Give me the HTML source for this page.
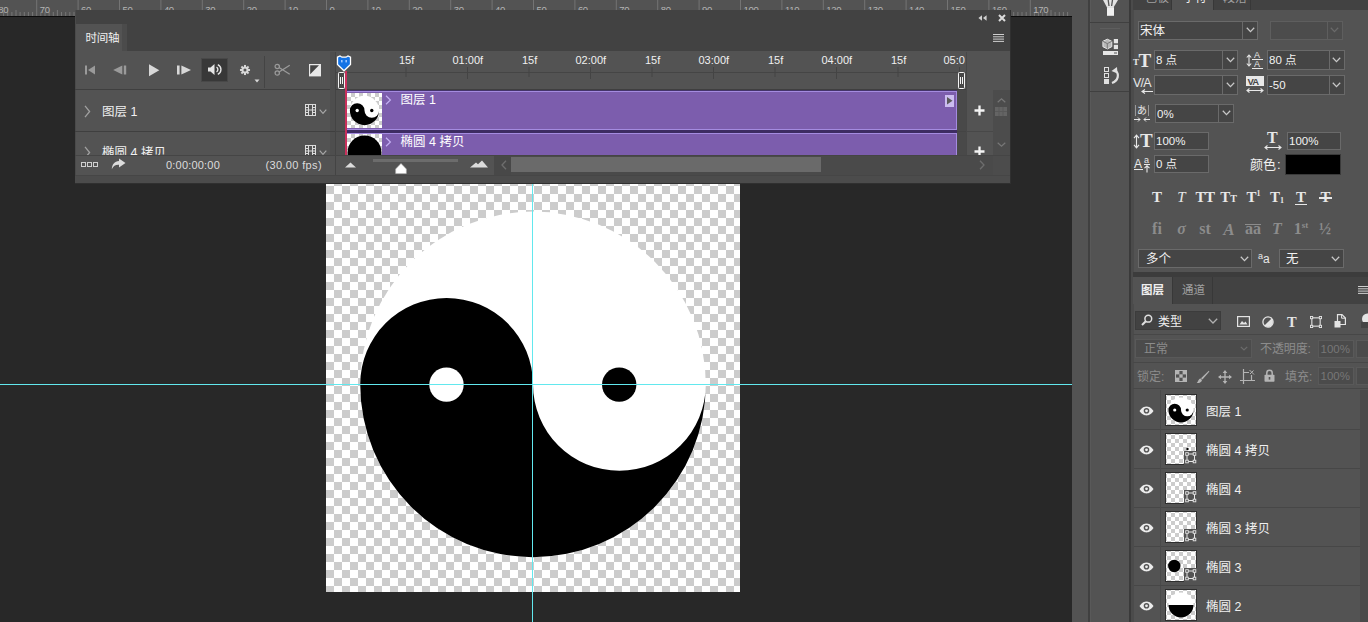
<!DOCTYPE html>
<html lang="zh-CN"><head><meta charset="utf-8"><title>时间轴</title>
<style>
html,body{margin:0;padding:0}
body{width:1368px;height:622px;background:#282828;position:relative;overflow:hidden;font-family:"Liberation Sans","Noto Sans CJK SC",sans-serif}
div,svg{position:absolute;box-sizing:border-box}
.t{white-space:nowrap;line-height:1}
.f{background:#454545;border:1px solid #686868}
.serif{font-family:"Liberation Serif","Noto Serif CJK SC",serif}
</style></head><body>

<div style="left:0px;top:0px;width:1072px;height:16px;background:#535353;"></div>
<div style="left:0px;top:16px;width:1072px;height:1px;background:#0c0c0c;"></div>
<svg style="left:0px;top:0px;" width="1072" height="16" viewBox="0 0 1072 16"><path d="M36.7 0V16M78.1 0V16M119.5 0V16M160.9 0V16M202.3 0V16M243.7 0V16M285.1 0V16M326.5 0V16M367.9 0V16M409.3 0V16M450.7 0V16M492.1 0V16M533.5 0V16M574.9 0V16M616.3 0V16M657.7 0V16M699.1 0V16M740.5 0V16M781.9 0V16M823.3 0V16M864.7 0V16M906.1 0V16M947.5 0V16M988.9 0V16M1030.3 0V16" stroke="#747474" stroke-width="1" fill="none"/><path d="M3.6 12V16M7.7 12V16M11.9 12V16M16.0 10V16M20.1 12V16M24.3 12V16M28.4 12V16M32.6 12V16M40.8 12V16M45.0 12V16M49.1 12V16M53.3 12V16M57.4 10V16M61.5 12V16M65.7 12V16M69.8 12V16M74.0 12V16M82.2 12V16M86.4 12V16M90.5 12V16M94.7 12V16M98.8 10V16M102.9 12V16M107.1 12V16M111.2 12V16M115.4 12V16M123.6 12V16M127.8 12V16M131.9 12V16M136.1 12V16M140.2 10V16M144.3 12V16M148.5 12V16M152.6 12V16M156.8 12V16M165.0 12V16M169.2 12V16M173.3 12V16M177.5 12V16M181.6 10V16M185.7 12V16M189.9 12V16M194.0 12V16M198.2 12V16M206.4 12V16M210.6 12V16M214.7 12V16M218.9 12V16M223.0 10V16M227.1 12V16M231.3 12V16M235.4 12V16M239.6 12V16M247.8 12V16M252.0 12V16M256.1 12V16M260.3 12V16M264.4 10V16M268.5 12V16M272.7 12V16M276.8 12V16M281.0 12V16M289.2 12V16M293.4 12V16M297.5 12V16M301.7 12V16M305.8 10V16M309.9 12V16M314.1 12V16M318.2 12V16M322.4 12V16M330.6 12V16M334.8 12V16M338.9 12V16M343.1 12V16M347.2 10V16M351.3 12V16M355.5 12V16M359.6 12V16M363.8 12V16M372.0 12V16M376.2 12V16M380.3 12V16M384.5 12V16M388.6 10V16M392.7 12V16M396.9 12V16M401.0 12V16M405.2 12V16M413.4 12V16M417.6 12V16M421.7 12V16M425.9 12V16M430.0 10V16M434.1 12V16M438.3 12V16M442.4 12V16M446.6 12V16M454.8 12V16M459.0 12V16M463.1 12V16M467.3 12V16M471.4 10V16M475.5 12V16M479.7 12V16M483.8 12V16M488.0 12V16M496.2 12V16M500.4 12V16M504.5 12V16M508.7 12V16M512.8 10V16M516.9 12V16M521.1 12V16M525.2 12V16M529.4 12V16M537.6 12V16M541.8 12V16M545.9 12V16M550.1 12V16M554.2 10V16M558.3 12V16M562.5 12V16M566.6 12V16M570.8 12V16M579.0 12V16M583.2 12V16M587.3 12V16M591.5 12V16M595.6 10V16M599.7 12V16M603.9 12V16M608.0 12V16M612.2 12V16M620.4 12V16M624.6 12V16M628.7 12V16M632.9 12V16M637.0 10V16M641.1 12V16M645.3 12V16M649.4 12V16M653.6 12V16M661.8 12V16M666.0 12V16M670.1 12V16M674.3 12V16M678.4 10V16M682.5 12V16M686.7 12V16M690.8 12V16M695.0 12V16M703.2 12V16M707.4 12V16M711.5 12V16M715.7 12V16M719.8 10V16M723.9 12V16M728.1 12V16M732.2 12V16M736.4 12V16M744.6 12V16M748.8 12V16M752.9 12V16M757.1 12V16M761.2 10V16M765.3 12V16M769.5 12V16M773.6 12V16M777.8 12V16M786.0 12V16M790.2 12V16M794.3 12V16M798.5 12V16M802.6 10V16M806.7 12V16M810.9 12V16M815.0 12V16M819.2 12V16M827.4 12V16M831.6 12V16M835.7 12V16M839.9 12V16M844.0 10V16M848.1 12V16M852.3 12V16M856.4 12V16M860.6 12V16M868.8 12V16M873.0 12V16M877.1 12V16M881.3 12V16M885.4 10V16M889.5 12V16M893.7 12V16M897.8 12V16M902.0 12V16M910.2 12V16M914.4 12V16M918.5 12V16M922.7 12V16M926.8 10V16M930.9 12V16M935.1 12V16M939.2 12V16M943.4 12V16M951.6 12V16M955.8 12V16M959.9 12V16M964.1 12V16M968.2 10V16M972.3 12V16M976.5 12V16M980.6 12V16M984.8 12V16M993.0 12V16M997.2 12V16M1001.3 12V16M1005.5 12V16M1009.6 10V16M1013.7 12V16M1017.9 12V16M1022.0 12V16M1026.2 12V16M1034.4 12V16M1038.6 12V16M1042.7 12V16M1046.9 12V16M1051.0 10V16M1055.1 12V16M1059.3 12V16M1063.4 12V16M1067.6 12V16" stroke="#777" stroke-width="1" fill="none"/></svg>
<div class="t" style="left:-1.7px;top:4.8px;font-size:9.5px;color:#b4b4b4;letter-spacing:-0.3px">80</div>
<div class="t" style="left:39.7px;top:4.8px;font-size:9.5px;color:#b4b4b4;letter-spacing:-0.3px">70</div>
<div class="t" style="left:81.1px;top:4.8px;font-size:9.5px;color:#b4b4b4;letter-spacing:-0.3px">60</div>
<div class="t" style="left:122.5px;top:4.8px;font-size:9.5px;color:#b4b4b4;letter-spacing:-0.3px">50</div>
<div class="t" style="left:163.9px;top:4.8px;font-size:9.5px;color:#b4b4b4;letter-spacing:-0.3px">40</div>
<div class="t" style="left:205.3px;top:4.8px;font-size:9.5px;color:#b4b4b4;letter-spacing:-0.3px">30</div>
<div class="t" style="left:246.7px;top:4.8px;font-size:9.5px;color:#b4b4b4;letter-spacing:-0.3px">20</div>
<div class="t" style="left:288.1px;top:4.8px;font-size:9.5px;color:#b4b4b4;letter-spacing:-0.3px">10</div>
<div class="t" style="left:329.5px;top:4.8px;font-size:9.5px;color:#b4b4b4;letter-spacing:-0.3px">0</div>
<div class="t" style="left:370.9px;top:4.8px;font-size:9.5px;color:#b4b4b4;letter-spacing:-0.3px">10</div>
<div class="t" style="left:412.3px;top:4.8px;font-size:9.5px;color:#b4b4b4;letter-spacing:-0.3px">20</div>
<div class="t" style="left:453.7px;top:4.8px;font-size:9.5px;color:#b4b4b4;letter-spacing:-0.3px">30</div>
<div class="t" style="left:495.1px;top:4.8px;font-size:9.5px;color:#b4b4b4;letter-spacing:-0.3px">40</div>
<div class="t" style="left:536.5px;top:4.8px;font-size:9.5px;color:#b4b4b4;letter-spacing:-0.3px">50</div>
<div class="t" style="left:577.9px;top:4.8px;font-size:9.5px;color:#b4b4b4;letter-spacing:-0.3px">60</div>
<div class="t" style="left:619.3px;top:4.8px;font-size:9.5px;color:#b4b4b4;letter-spacing:-0.3px">70</div>
<div class="t" style="left:660.7px;top:4.8px;font-size:9.5px;color:#b4b4b4;letter-spacing:-0.3px">80</div>
<div class="t" style="left:702.1px;top:4.8px;font-size:9.5px;color:#b4b4b4;letter-spacing:-0.3px">90</div>
<div class="t" style="left:743.5px;top:4.8px;font-size:9.5px;color:#b4b4b4;letter-spacing:-0.3px">100</div>
<div class="t" style="left:784.9px;top:4.8px;font-size:9.5px;color:#b4b4b4;letter-spacing:-0.3px">110</div>
<div class="t" style="left:826.3px;top:4.8px;font-size:9.5px;color:#b4b4b4;letter-spacing:-0.3px">120</div>
<div class="t" style="left:867.7px;top:4.8px;font-size:9.5px;color:#b4b4b4;letter-spacing:-0.3px">130</div>
<div class="t" style="left:909.1px;top:4.8px;font-size:9.5px;color:#b4b4b4;letter-spacing:-0.3px">140</div>
<div class="t" style="left:950.5px;top:4.8px;font-size:9.5px;color:#b4b4b4;letter-spacing:-0.3px">150</div>
<div class="t" style="left:991.9px;top:4.8px;font-size:9.5px;color:#b4b4b4;letter-spacing:-0.3px">160</div>
<div class="t" style="left:1033.3px;top:4.8px;font-size:9.5px;color:#b4b4b4;letter-spacing:-0.3px">170</div>
<div style="left:326px;top:178px;width:414px;height:414px;background:#fff;background-image:conic-gradient(#ccc 25%,#fff 0 50%,#ccc 0 75%,#fff 0);background-size:16px 16px;"></div>
<svg style="left:326px;top:178px;" width="414" height="414" viewBox="0 0 414 414"><circle cx="207" cy="206.4" r="172.8" fill="#fff"/>
<path d="M34.2 206.4 A172.8 172.8 0 0 0 379.8 206.4 A86.4 86.4 0 0 1 207 206.4 A86.4 86.4 0 0 0 34.2 206.4 Z" fill="#000"/>
<circle cx="120.5" cy="206.6" r="17.2" fill="#fff"/><circle cx="293.2" cy="206.6" r="17.2" fill="#000"/></svg>
<div style="left:0px;top:384px;width:1072px;height:1px;background:#62e8ee;"></div>
<div style="left:532px;top:17px;width:1px;height:605px;background:#62e8ee;"></div>
<div style="left:75px;top:10px;width:935px;height:173px;background:#535353;"></div>
<div style="left:75px;top:10px;width:935px;height:14px;background:#424242;"></div>
<div style="left:127px;top:24px;width:883px;height:27px;background:#424242;"></div>
<div style="left:122px;top:24px;width:5px;height:27px;background:#4b4b4b;"></div>
<div style="left:75px;top:10px;width:1px;height:173px;background:#4a4a4a;"></div>
<svg style="left:978px;top:15px;" width="9" height="6" viewBox="0 0 9 6"><path d="M4 0.3L0.4 3L4 5.7Z M8.6 0.3L5 3L8.6 5.7Z" fill="#d0d0d0"/></svg>
<svg style="left:998px;top:14px;" width="8" height="8" viewBox="0 0 8 8"><path d="M1 1L7 7M7 1L1 7" stroke="#dcdcdc" stroke-width="2"/></svg>
<svg style="left:993px;top:34px;" width="11" height="8" viewBox="0 0 11 8"><path d="M0 0.5H11M0 2.8H11M0 5.1H11M0 7.4H11" stroke="#cfcfcf" stroke-width="1"/></svg>
<div class="t" style="left:85.5px;top:32.5px;font-size:11.5px;color:#f0f0f0;letter-spacing:-0.3px">时间轴</div>
<div style="left:75px;top:89px;width:891px;height:1px;background:#3f3f3f;"></div>
<svg style="left:84px;top:64px;" width="12" height="12" viewBox="0 0 12 12"><rect x="1" y="1.5" width="2" height="9" fill="#9a9a9a"/><path d="M11 1.5V10.5L4 6Z" fill="#9a9a9a"/></svg>
<svg style="left:112px;top:64px;" width="16" height="12" viewBox="0 0 16 12"><path d="M10.3 1.5V10.5L1.2 6Z" fill="#9a9a9a"/><rect x="11.8" y="1.5" width="2.4" height="9" fill="#9a9a9a"/></svg>
<svg style="left:148px;top:63px;" width="13" height="14" viewBox="0 0 13 14"><path d="M1 1.3L11.3 7.2L1 13.2Z" fill="#d8d8d8"/></svg>
<svg style="left:176px;top:64px;" width="16" height="12" viewBox="0 0 16 12"><rect x="1" y="1.5" width="2.6" height="9" fill="#d8d8d8"/><path d="M5.4 1.5V10.5L15 6Z" fill="#d8d8d8"/></svg>
<div style="left:201px;top:58px;width:27px;height:24px;background:#383838;border:1px solid #484848;"></div>
<svg style="left:207px;top:63px;" width="16" height="13" viewBox="0 0 16 13"><path d="M1 4.5H3.5L7.5 1V12L3.5 8.5H1Z" fill="#e4e4e4"/><path d="M9.5 4.2A2.6 2.6 0 0 1 9.5 8.8" stroke="#e4e4e4" stroke-width="1.4" fill="none"/><path d="M10.8 1.6A5.4 5.4 0 0 1 10.8 11.4" stroke="#e4e4e4" stroke-width="1.4" fill="none"/></svg>
<svg style="left:239px;top:64px;" width="12" height="12" viewBox="0 0 12 12"><g transform="translate(6 6) scale(0.9)"><rect x="-1.1" y="-5.6" width="2.2" height="3" transform="rotate(0)" fill="#d8d8d8"/><rect x="-1.1" y="-5.6" width="2.2" height="3" transform="rotate(45)" fill="#d8d8d8"/><rect x="-1.1" y="-5.6" width="2.2" height="3" transform="rotate(90)" fill="#d8d8d8"/><rect x="-1.1" y="-5.6" width="2.2" height="3" transform="rotate(135)" fill="#d8d8d8"/><rect x="-1.1" y="-5.6" width="2.2" height="3" transform="rotate(180)" fill="#d8d8d8"/><rect x="-1.1" y="-5.6" width="2.2" height="3" transform="rotate(225)" fill="#d8d8d8"/><rect x="-1.1" y="-5.6" width="2.2" height="3" transform="rotate(270)" fill="#d8d8d8"/><rect x="-1.1" y="-5.6" width="2.2" height="3" transform="rotate(315)" fill="#d8d8d8"/><circle r="3.9" fill="#d8d8d8"/><circle r="1.7" fill="#535353"/></g></svg>
<svg style="left:254px;top:79px;" width="6" height="4" viewBox="0 0 6 4"><path d="M0.5 0.5H5.5L3 3.5Z" fill="#d8d8d8"/></svg>
<div style="left:264px;top:56px;width:1px;height:32px;background:#444;"></div>
<svg style="left:274px;top:63px;" width="19" height="15" viewBox="0 0 19 15"><g transform="scale(0.9)"><circle cx="3.6" cy="3.8" r="2.4" stroke="#9a9a9a" stroke-width="1.4" fill="none"/><circle cx="3.6" cy="11.2" r="2.4" stroke="#9a9a9a" stroke-width="1.4" fill="none"/><path d="M5.6 5L17.5 12.5M5.6 10L17.5 2.5" stroke="#9a9a9a" stroke-width="1.5"/></g></svg>
<svg style="left:309px;top:64px;" width="12" height="13" viewBox="0 0 12 13"><rect x="0" y="0" width="12" height="12.4" fill="#e8e8e8"/><path d="M1.2 1.2H10L1.2 10.2Z" fill="#444"/></svg>
<div style="left:330px;top:52px;width:6px;height:103px;background:#4e4e4e;"></div>
<div style="left:335px;top:52px;width:1px;height:131px;background:#444;"></div>
<svg style="left:84px;top:105px;" width="7" height="13" viewBox="0 0 7 13"><path d="M1 0.8L5.6 6.5L1 12.2" stroke="#a0a0a0" stroke-width="1.3" fill="none"/></svg>
<div class="t" style="left:102px;top:106px;font-size:12.5px;color:#f0f0f0;">图层 1</div>
<svg style="left:305px;top:104px;" width="11" height="13" viewBox="0 0 11 13"><rect x="0.5" y="0.5" width="10" height="11" fill="none" stroke="#dcdcdc"/><path d="M3.5 0V12M7.5 0V12M3.5 6H7.5" stroke="#dcdcdc"/><path d="M0 3.5H3.5M0 6H3.5M0 8.5H3.5M7.5 3.5H11M7.5 6H11M7.5 8.5H11" stroke="#dcdcdc"/></svg>
<svg style="left:319px;top:109px;" width="8" height="6" viewBox="0 0 8 6"><path d="M0.7 0.7L4 4.3L7.3 0.7" stroke="#a8a8a8" stroke-width="1.2" fill="none"/></svg>
<div style="left:75px;top:131px;width:260px;height:1px;background:#3f3f3f;"></div>
<div style="left:75px;top:132px;width:260px;height:23px;overflow:hidden">
<svg style="left:9px;top:14px;" width="7" height="13" viewBox="0 0 7 13"><path d="M1 0.8L5.6 6.5L1 12.2" stroke="#a0a0a0" stroke-width="1.3" fill="none"/></svg>
<div class="t" style="left:27px;top:15px;font-size:12.5px;color:#f0f0f0;">椭圆 4 拷贝</div>
<svg style="left:230px;top:13px;" width="11" height="13" viewBox="0 0 11 13"><rect x="0.5" y="0.5" width="10" height="11" fill="none" stroke="#dcdcdc"/><path d="M3.5 0V12M7.5 0V12M3.5 6H7.5" stroke="#dcdcdc"/><path d="M0 3.5H3.5M0 6H3.5M0 8.5H3.5M7.5 3.5H11M7.5 6H11M7.5 8.5H11" stroke="#dcdcdc"/></svg>
<svg style="left:244px;top:18px;" width="8" height="6" viewBox="0 0 8 6"><path d="M0.7 0.7L4 4.3L7.3 0.7" stroke="#a8a8a8" stroke-width="1.2" fill="none"/></svg>
</div>
<div style="left:336px;top:72px;width:630px;height:1px;background:#454545;"></div>
<svg style="left:336px;top:52px;" width="630" height="37" viewBox="0 0 630 37"><rect x="69.5" y="15" width="1" height="10" fill="#444"/><rect x="131.0" y="15" width="1" height="12" fill="#444"/><rect x="192.5" y="15" width="1" height="10" fill="#444"/><rect x="254.0" y="15" width="1" height="12" fill="#444"/><rect x="315.5" y="15" width="1" height="10" fill="#444"/><rect x="377.0" y="15" width="1" height="12" fill="#444"/><rect x="438.5" y="15" width="1" height="10" fill="#444"/><rect x="500.0" y="15" width="1" height="12" fill="#444"/><rect x="561.5" y="15" width="1" height="10" fill="#444"/><rect x="623.0" y="15" width="1" height="12" fill="#444"/></svg>
<div class="t" style="left:399.0px;top:55px;font-size:11px;color:#f0f0f0;">15f</div>
<div class="t" style="left:452.5px;top:55px;font-size:11px;color:#f0f0f0;">01:00f</div>
<div class="t" style="left:522.0px;top:55px;font-size:11px;color:#f0f0f0;">15f</div>
<div class="t" style="left:575.5px;top:55px;font-size:11px;color:#f0f0f0;">02:00f</div>
<div class="t" style="left:645.0px;top:55px;font-size:11px;color:#f0f0f0;">15f</div>
<div class="t" style="left:698.5px;top:55px;font-size:11px;color:#f0f0f0;">03:00f</div>
<div class="t" style="left:768.0px;top:55px;font-size:11px;color:#f0f0f0;">15f</div>
<div class="t" style="left:821.5px;top:55px;font-size:11px;color:#f0f0f0;">04:00f</div>
<div class="t" style="left:891.0px;top:55px;font-size:11px;color:#f0f0f0;">15f</div>
<div style="left:0;top:52px;width:965px;height:20px;overflow:hidden"><div class="t" style="left:943.5px;top:3px;font-size:11px;color:#f0f0f0">05:00f</div></div>
<div style="left:336px;top:90px;width:630px;height:65px;background:#4f4f4f;"></div>
<div style="left:957px;top:90px;width:9px;height:65px;background:#494949;"></div>
<div style="left:336px;top:131px;width:630px;height:1px;background:#444;"></div>
<div style="left:346px;top:90px;width:611px;height:1px;background:#45356a;"></div>
<div style="left:346px;top:91px;width:611px;height:39px;background:#7c5dad;border:1px solid #a48be0;border-left:0;"></div>
<div style="left:346px;top:130px;width:611px;height:3px;background:#3d2c62;"></div>
<div style="left:346px;top:133px;width:611px;height:22px;background:#7c5dad;border-top:1px solid #a48be0;border-right:1px solid #a48be0;"></div>
<div style="left:347px;top:93px;width:35px;height:35px;background-color:#fff;background-image:conic-gradient(#ccc 25%,#fff 0 50%,#ccc 0 75%,#fff 0);background-size:8px 8px;overflow:hidden">
<svg style="left:0;top:0" width="35" height="35" viewBox="0 0 414 414"><circle cx="207" cy="207" r="173" fill="#fff"/><path d="M34 207 A173 173 0 0 0 380 207 A86.5 86.5 0 0 1 207 207 A86.5 86.5 0 0 0 34 207 Z" fill="#000"/><circle cx="120.5" cy="207" r="20" fill="#fff"/><circle cx="293.2" cy="207" r="20" fill="#000"/></svg></div>
<div style="left:347px;top:134px;width:35px;height:21px;background-color:#fff;background-image:conic-gradient(#ccc 25%,#fff 0 50%,#ccc 0 75%,#fff 0);background-size:8px 8px;overflow:hidden">
<svg style="left:0;top:0" width="35" height="21"><circle cx="17.5" cy="18.5" r="17" fill="#000"/></svg></div>
<svg style="left:385px;top:95px;" width="7" height="10" viewBox="0 0 7 10"><path d="M1 0.8L5.4 5L1 9.2" stroke="#c3aef2" stroke-width="1.2" fill="none"/></svg>
<div class="t" style="left:400.5px;top:94px;font-size:12.5px;color:#fff;">图层 1</div>
<svg style="left:385px;top:137px;" width="7" height="10" viewBox="0 0 7 10"><path d="M1 0.8L5.4 5L1 9.2" stroke="#c3aef2" stroke-width="1.2" fill="none"/></svg>
<div class="t" style="left:400.5px;top:136px;font-size:12.5px;color:#fff;">椭圆 4 拷贝</div>
<div style="left:945px;top:95px;width:9px;height:11.5px;background:#cbbdf0;"></div>
<svg style="left:945px;top:95px;" width="10" height="11" viewBox="0 0 10 11"><path d="M2 2L7.5 5.7L2 9.4Z" fill="#5a5a5a"/></svg>
<svg style="left:336px;top:55px;" width="16" height="17" viewBox="0 0 16 17"><path d="M1.5 2.2L4 1L6 2.2H10L12 1L14.5 2.2V9.5L8 15.8L1.5 9.5Z" fill="#1473e6" stroke="#fff" stroke-width="1.3"/><rect x="5" y="5" width="1.6" height="2.4" fill="#9cc6ff"/><rect x="9.4" y="5" width="1.6" height="2.4" fill="#9cc6ff"/></svg>
<div style="left:344.5px;top:71px;width:2px;height:84px;background:#c9305c;"></div>
<svg style="left:338px;top:72px;" width="7" height="17" viewBox="0 0 7 17"><rect x="0.5" y="0.5" width="6" height="16" rx="0.8" fill="#484848" stroke="#f4f4f4" stroke-width="1"/><rect x="2" y="5" width="1" height="7" fill="#f4f4f4"/><rect x="4" y="5" width="1" height="7" fill="#f4f4f4"/></svg>
<svg style="left:958px;top:72px;" width="7" height="17" viewBox="0 0 7 17"><rect x="0.5" y="0.5" width="6" height="16" rx="0.8" fill="#484848" stroke="#f4f4f4" stroke-width="1"/><rect x="2" y="5" width="1" height="7" fill="#f4f4f4"/><rect x="4" y="5" width="1" height="7" fill="#f4f4f4"/></svg>
<div style="left:344.5px;top:72px;width:2px;height:17px;background:#c9305c;"></div>
<div style="left:966px;top:52px;width:1px;height:103px;background:#484848;"></div>
<div style="left:966px;top:131px;width:27px;height:1px;background:#484848;"></div>
<svg style="left:974px;top:105px;" width="11" height="11" viewBox="0 0 11 11"><path d="M5.5 0.5V10.5M0.5 5.5H10.5" stroke="#f4f4f4" stroke-width="2.3"/></svg>
<div style="left:966px;top:132px;width:27px;height:23px;overflow:hidden">
<svg style="left:8px;top:14px;" width="11" height="11" viewBox="0 0 11 11"><path d="M5.5 0.5V10.5M0.5 5.5H10.5" stroke="#f4f4f4" stroke-width="2.3"/></svg>
</div>
<div style="left:993px;top:90px;width:17px;height:65px;background:#4c4c4c;"></div>
<svg style="left:997px;top:98px;" width="9" height="5" viewBox="0 0 9 5"><path d="M0.7 4.3L4.5 0.9L8.3 4.3" stroke="#777" stroke-width="1.2" fill="none"/></svg>
<svg style="left:995px;top:107px;" width="12" height="9" viewBox="0 0 12 9"><rect width="12" height="9" fill="#646464"/><path d="M4 0V9M8 0V9M0 4.5H12" stroke="#585858"/></svg>
<svg style="left:997px;top:142px;" width="9" height="5" viewBox="0 0 9 5"><path d="M0.7 0.7L4.5 4.1L8.3 0.7" stroke="#777" stroke-width="1.2" fill="none"/></svg>
<div style="left:75px;top:155px;width:935px;height:1px;background:#454545;"></div>
<div style="left:75px;top:175px;width:935px;height:1px;background:#464646;"></div>
<div style="left:75px;top:176px;width:935px;height:7px;background:#4c4c4c;"></div>
<div style="left:75px;top:183px;width:935px;height:1px;background:#303030;"></div>
<div style="left:1010px;top:10px;width:1px;height:174px;background:#303030;"></div>
<div style="left:81px;top:162px;width:5px;height:5px;background:transparent;border:1px solid #d0d0d0;"></div>
<div style="left:87px;top:162px;width:5px;height:5px;background:transparent;border:1px solid #d0d0d0;"></div>
<div style="left:93px;top:162px;width:5px;height:5px;background:transparent;border:1px solid #d0d0d0;"></div>
<svg style="left:111px;top:158px;" width="15" height="12" viewBox="0 0 15 12"><path d="M8 0.5L14.5 5L8 9.5V6.8C4.5 6.6 2.3 8 0.8 11.2C1 6.5 3.5 3.4 8 3.1Z" fill="#dcdcdc"/></svg>
<div class="t" style="left:166px;top:160px;font-size:11px;color:#dcdcdc;letter-spacing:0.2px">0:00:00:00</div>
<div class="t" style="left:265.5px;top:160px;font-size:11px;color:#dcdcdc;letter-spacing:0.35px">(30.00 fps)</div>
<svg style="left:345px;top:162px;" width="11" height="6" viewBox="0 0 11 6"><path d="M0 5.5L5.5 0.5L11 5.5Z" fill="#dcdcdc"/></svg>
<div style="left:373px;top:159px;width:85px;height:3px;background:#6c6c6c;"></div>
<svg style="left:394.5px;top:162.5px;" width="12" height="11" viewBox="0 0 12 11"><path d="M6 0.5L11.3 6V10.5H0.7V6Z" fill="#fff" stroke="#bbb" stroke-width="0.6"/></svg>
<svg style="left:470px;top:160px;" width="18" height="8" viewBox="0 0 18 8"><path d="M0 7.5L6 2.5L8 4.2L12 0.5L18 7.5Z" fill="#dcdcdc"/></svg>
<div style="left:494px;top:156px;width:17px;height:19px;background:#484848;"></div>
<svg style="left:500.5px;top:160px;" width="6" height="10" viewBox="0 0 6 10"><path d="M5 0.8L1 5L5 9.2" stroke="#6e6e6e" stroke-width="1.3" fill="none"/></svg>
<div style="left:511px;top:156px;width:482px;height:19px;background:#4a4a4a;"></div>
<div style="left:511px;top:157px;width:310px;height:15px;background:#6a6a6a;"></div>
<svg style="left:979px;top:160px;" width="6" height="10" viewBox="0 0 6 10"><path d="M1 0.8L5 5L1 9.2" stroke="#6e6e6e" stroke-width="1.3" fill="none"/></svg>
<div style="left:993px;top:156px;width:17px;height:19px;background:#4c4c4c;"></div>
<div style="left:1072px;top:0px;width:296px;height:622px;background:#535353;"></div>
<div style="left:1088px;top:0px;width:2px;height:622px;background:#404040;"></div>
<div style="left:1090px;top:0px;width:1px;height:622px;background:#595959;"></div>
<div style="left:1128.5px;top:0px;width:2.5px;height:622px;background:#3a3a3a;"></div>
<div style="left:1131px;top:0px;width:3px;height:622px;background:#4b4b4b;"></div>
<div style="left:1090px;top:22px;width:39px;height:1px;background:#404040;"></div>
<div style="left:1090px;top:91px;width:39px;height:1px;background:#404040;"></div>
<div style="left:1100px;top:28px;width:20px;height:1px;background:#5e5e5e;"></div>
<svg style="left:1100px;top:0px;" width="20" height="17" viewBox="0 0 20 17"><path d="M3 0L7 7.5H13.5L18 0Z" fill="#e2e2e2"/><path d="M8.2 0L9 6M12.5 0L11.6 6" stroke="#535353" stroke-width="1.3"/><rect x="7" y="7.2" width="7" height="8.6" fill="#f0f0f0"/></svg>
<svg style="left:1102px;top:38px;" width="18" height="18" viewBox="0 0 18 18"><path d="M5.3 1.2L9.8 3.3V8.7L5.3 10.9L0.9 8.7V3.3Z" fill="#b8b8b8" stroke="#e6e6e6" stroke-width="1"/><path d="M0.9 3.3L5.3 5.6L9.8 3.3M5.3 5.6V10.9" stroke="#707070" stroke-width="0.9" fill="none"/><rect x="11.8" y="1" width="4.2" height="4.3" fill="#e6e6e6"/><rect x="11.8" y="6.8" width="4.2" height="4.3" fill="#e6e6e6"/><rect x="1" y="13" width="15" height="4" fill="#e6e6e6"/><path d="M12 15H15" stroke="#555"/></svg>
<svg style="left:1102px;top:66px;" width="19" height="19" viewBox="0 0 19 19"><rect x="2.5" y="1.5" width="4" height="4" fill="none" stroke="#e0e0e0"/><rect x="2.5" y="7.5" width="4" height="4" fill="none" stroke="#e0e0e0"/><rect x="2" y="13" width="5" height="5" fill="#e0e0e0"/><path d="M10 17C16.5 14.5 17.5 8 13.5 4.5" stroke="#e0e0e0" stroke-width="2.2" fill="none"/><path d="M9.5 5L15 1L15.5 7.5Z" fill="#e0e0e0"/></svg>
<div style="left:1133px;top:0px;width:235px;height:10px;background:#424242;"></div>
<div style="left:1172px;top:0px;width:41px;height:10px;background:#535353;"></div>
<div style="left:1171px;top:0px;width:1px;height:10px;background:#383838;"></div>
<div style="left:1213px;top:0px;width:1px;height:10px;background:#383838;"></div>
<div style="left:1250px;top:0px;width:1px;height:10px;background:#383838;"></div>
<div style="left:1133px;top:0;width:235px;height:10px;overflow:hidden">
<div class="t" style="left:12px;top:-8.5px;font-size:12px;color:#a0a0a0;">色板</div>
<div class="t" style="left:50px;top:-8.5px;font-size:12px;color:#f0f0f0;">字符</div>
<div class="t" style="left:90px;top:-8.5px;font-size:12px;color:#a0a0a0;">段落</div>
</div>
<div style="left:1138px;top:21px;width:120px;height:19px;background:#454545;border:1px solid #6a6a6a;"></div>
<div style="left:1242px;top:21px;width:1px;height:19px;background:#6a6a6a;"></div>
<svg style="left:1246px;top:27px;" width="9" height="6" viewBox="0 0 9 6"><path d="M0.8 0.8L4.5 4.6L8.2 0.8" stroke="#c8c8c8" stroke-width="1.3" fill="none"/></svg>
<div class="t" style="left:1140px;top:25.25px;font-size:12.5px;color:#f2f2f2;">宋体</div>
<div style="left:1270px;top:21px;width:73px;height:19px;background:#4c4c4c;border:1px solid #5e5e5e;"></div>
<div style="left:1327px;top:21px;width:1px;height:19px;background:#5e5e5e;"></div>
<svg style="left:1330px;top:27px;" width="9" height="6" viewBox="0 0 9 6"><path d="M0.8 0.8L4.5 4.6L8.2 0.8" stroke="#6a6a6a" stroke-width="1.3" fill="none"/></svg>
<div style="left:1154px;top:50px;width:84px;height:20px;background:#454545;border:1px solid #6a6a6a;"></div>
<div style="left:1222px;top:50px;width:1px;height:20px;background:#6a6a6a;"></div>
<svg style="left:1226px;top:57px;" width="9" height="6" viewBox="0 0 9 6"><path d="M0.8 0.8L4.5 4.6L8.2 0.8" stroke="#c8c8c8" stroke-width="1.3" fill="none"/></svg>
<div class="t" style="left:1156px;top:55.25px;font-size:11.5px;color:#f2f2f2;">8 点</div>
<div style="left:1267px;top:50px;width:78px;height:20px;background:#454545;border:1px solid #6a6a6a;"></div>
<div style="left:1329px;top:50px;width:1px;height:20px;background:#6a6a6a;"></div>
<svg style="left:1332px;top:57px;" width="9" height="6" viewBox="0 0 9 6"><path d="M0.8 0.8L4.5 4.6L8.2 0.8" stroke="#c8c8c8" stroke-width="1.3" fill="none"/></svg>
<div class="t" style="left:1269px;top:55.25px;font-size:11.5px;color:#f2f2f2;">80 点</div>
<div style="left:1154px;top:75px;width:84px;height:20px;background:#454545;border:1px solid #6a6a6a;"></div>
<div style="left:1222px;top:75px;width:1px;height:20px;background:#6a6a6a;"></div>
<svg style="left:1226px;top:82px;" width="9" height="6" viewBox="0 0 9 6"><path d="M0.8 0.8L4.5 4.6L8.2 0.8" stroke="#c8c8c8" stroke-width="1.3" fill="none"/></svg>
<div style="left:1267px;top:75px;width:78px;height:20px;background:#454545;border:1px solid #6a6a6a;"></div>
<div style="left:1329px;top:75px;width:1px;height:20px;background:#6a6a6a;"></div>
<svg style="left:1332px;top:82px;" width="9" height="6" viewBox="0 0 9 6"><path d="M0.8 0.8L4.5 4.6L8.2 0.8" stroke="#c8c8c8" stroke-width="1.3" fill="none"/></svg>
<div class="t" style="left:1269px;top:80.25px;font-size:11.5px;color:#f2f2f2;">-50</div>
<div style="left:1155px;top:104px;width:79px;height:19px;background:#454545;border:1px solid #6a6a6a;"></div>
<div style="left:1218px;top:104px;width:1px;height:19px;background:#6a6a6a;"></div>
<svg style="left:1222px;top:110px;" width="9" height="6" viewBox="0 0 9 6"><path d="M0.8 0.8L4.5 4.6L8.2 0.8" stroke="#c8c8c8" stroke-width="1.3" fill="none"/></svg>
<div class="t" style="left:1157px;top:108.75px;font-size:11.5px;color:#f2f2f2;">0%</div>
<div style="left:1154px;top:132px;width:55px;height:18px;background:#454545;border:1px solid #6a6a6a;"></div>
<div class="t" style="left:1156px;top:136.25px;font-size:11.5px;color:#f2f2f2;">100%</div>
<div style="left:1287px;top:132px;width:54px;height:18px;background:#454545;border:1px solid #6a6a6a;"></div>
<div class="t" style="left:1289px;top:136.25px;font-size:11.5px;color:#f2f2f2;">100%</div>
<div style="left:1154px;top:155px;width:55px;height:18px;background:#454545;border:1px solid #6a6a6a;"></div>
<div class="t" style="left:1156px;top:159.25px;font-size:11.5px;color:#f2f2f2;">0 点</div>
<div class="t" style="left:1250px;top:158px;font-size:13px;color:#f0f0f0;">颜色</div>
<div class="t" style="left:1277px;top:158px;font-size:13px;color:#f0f0f0;">:</div>
<div style="left:1285px;top:154px;width:56px;height:21px;background:#000;border:1px solid #3a3a3a;"></div>
<div class="t serif" style="left:1133px;top:58px;font-size:9px;color:#e8e8e8;font-weight:bold">T</div>
<div class="t serif" style="left:1138.5px;top:50.5px;font-size:19px;color:#e8e8e8;font-weight:bold">T</div>
<svg style="left:1246px;top:52px;" width="17" height="17" viewBox="0 0 17 17"><path d="M3 3.5V13.5M0.8 5.5L3 3L5.2 5.5M0.8 11.5L3 14L5.2 11.5" stroke="#e8e8e8" stroke-width="1.1" fill="none"/></svg>
<div class="t" style="left:1254px;top:51px;font-size:9px;color:#e8e8e8;">A</div>
<div class="t" style="left:1254px;top:60px;font-size:9px;color:#e8e8e8;">A</div>
<div style="left:1252px;top:59px;width:11px;height:1px;background:#e8e8e8;"></div>
<div style="left:1252px;top:68px;width:11px;height:1px;background:#e8e8e8;"></div>
<div class="t" style="left:1133px;top:77px;font-size:12.5px;color:#e8e8e8;letter-spacing:-0.8px">V/A</div>
<svg style="left:1141px;top:89px;" width="12" height="5" viewBox="0 0 12 5"><path d="M4 0.5L1 2.5L4 4.5M1 2.5H12" stroke="#e8e8e8" stroke-width="1.1" fill="none"/></svg>
<div style="left:1246px;top:76px;width:18px;height:10px;background:#e8e8e8;"></div>
<div class="t" style="left:1247.5px;top:76.5px;font-size:9.5px;color:#454545;font-weight:bold;letter-spacing:-0.8px">VA</div>
<svg style="left:1246px;top:88px;" width="18" height="5" viewBox="0 0 18 5"><path d="M3.5 0.5L1 2.5L3.5 4.5M1 2.5H17M14.5 0.5L17 2.5L14.5 4.5" stroke="#e8e8e8" stroke-width="1.1" fill="none"/></svg>
<div class="t" style="left:1137px;top:106px;font-size:10px;color:#e8e8e8;">あ</div>
<div style="left:1135px;top:105px;width:1px;height:11px;background:#999;"></div>
<div style="left:1148px;top:105px;width:1px;height:11px;background:#999;"></div>
<svg style="left:1134px;top:117px;" width="16" height="5" viewBox="0 0 16 5"><path d="M0 2.5H6M4 0.5L6 2.5L4 4.5M16 2.5H10M12 0.5L10 2.5L12 4.5" stroke="#e8e8e8" stroke-width="1" fill="none"/></svg>
<svg style="left:1133px;top:134px;" width="7" height="15" viewBox="0 0 7 15"><path d="M3.5 2V13M1 4.2L3.5 1.2L6 4.2M1 10.8L3.5 13.8L6 10.8" stroke="#e8e8e8" stroke-width="1.1" fill="none"/></svg>
<div class="t serif" style="left:1140px;top:131px;font-size:19px;color:#e8e8e8;font-weight:bold">T</div>
<div class="t serif" style="left:1267px;top:130px;font-size:16px;color:#e8e8e8;font-weight:bold">T</div>
<svg style="left:1264px;top:145px;" width="18" height="5" viewBox="0 0 18 5"><path d="M3.5 0.5L1 2.5L3.5 4.5M1 2.5H17M14.5 0.5L17 2.5L14.5 4.5" stroke="#e8e8e8" stroke-width="1.1" fill="none"/></svg>
<div class="t" style="left:1134px;top:158px;font-size:12px;color:#e8e8e8;">A</div>
<div style="left:1134px;top:169px;width:9px;height:1px;background:#e8e8e8;"></div>
<div class="t" style="left:1144px;top:156px;font-size:9px;color:#e8e8e8;">a</div>
<div style="left:1144px;top:164px;width:6px;height:1px;background:#e8e8e8;"></div>
<svg style="left:1143px;top:165px;" width="8" height="8" viewBox="0 0 8 8"><path d="M4 7.5V1M1.5 3.2L4 0.8L6.5 3.2" stroke="#e8e8e8" stroke-width="1.1" fill="none"/></svg>
<div class="t serif" style="left:1137px;top:189.5px;width:40px;text-align:center;font-size:15px;color:#e8e8e8;font-weight:bold;">T</div>
<div class="t serif" style="left:1161.5px;top:189.5px;width:40px;text-align:center;font-size:15px;color:#e8e8e8;font-weight:bold;font-weight:normal;"><i>T</i></div>
<div class="t serif" style="left:1185px;top:189.5px;width:40px;text-align:center;font-size:15px;color:#e8e8e8;font-weight:bold;letter-spacing:-0.5px;">TT</div>
<div class="t serif" style="left:1208.5px;top:189.5px;width:40px;text-align:center;font-size:15px;color:#e8e8e8;font-weight:bold;">T<span style="font-size:10px">T</span></div>
<div class="t serif" style="left:1233.5px;top:189.5px;width:40px;text-align:center;font-size:15px;color:#e8e8e8;font-weight:bold;">T<span style="font-size:8px;vertical-align:6px">1</span></div>
<div class="t serif" style="left:1257px;top:189.5px;width:40px;text-align:center;font-size:15px;color:#e8e8e8;font-weight:bold;">T<span style="font-size:8px;vertical-align:-1px">1</span></div>
<div class="t serif" style="left:1281px;top:189.5px;width:40px;text-align:center;font-size:15px;color:#e8e8e8;font-weight:bold;">T</div>
<div style="left:1295px;top:204px;width:12px;height:1px;background:#e8e8e8;"></div>
<div class="t serif" style="left:1305.5px;top:189.5px;width:40px;text-align:center;font-size:15px;color:#e8e8e8;font-weight:bold;">T</div>
<div style="left:1319px;top:197px;width:13px;height:1.5px;background:#e8e8e8;"></div>
<div class="t serif" style="left:1137px;top:221px;width:40px;text-align:center;font-size:16px;color:#8c8c8c;font-weight:bold;">fi</div>
<div class="t serif" style="left:1161.5px;top:221px;width:40px;text-align:center;font-size:16px;color:#8c8c8c;font-weight:bold;"><i>&#963;</i></div>
<div class="t serif" style="left:1185px;top:221px;width:40px;text-align:center;font-size:16px;color:#8c8c8c;font-weight:bold;">st</div>
<div class="t serif" style="left:1209px;top:221px;width:40px;text-align:center;font-size:17px;color:#8c8c8c;font-weight:bold;"><i>A</i></div>
<div class="t serif" style="left:1233px;top:221px;width:40px;text-align:center;font-size:16px;color:#8c8c8c;font-weight:bold;">aa</div>
<div style="left:1245px;top:224px;width:16px;height:1px;background:#8c8c8c;"></div>
<div class="t serif" style="left:1257px;top:221px;width:40px;text-align:center;font-size:16px;color:#8c8c8c;font-weight:bold;"><i>T</i></div>
<div class="t serif" style="left:1281px;top:221px;width:40px;text-align:center;font-size:16px;color:#8c8c8c;font-weight:bold;">1<span style="font-size:9px;vertical-align:6px">st</span></div>
<div class="t serif" style="left:1305px;top:221px;width:40px;text-align:center;font-size:16px;color:#8c8c8c;font-weight:bold;">&#189;</div>
<div style="left:1138px;top:249px;width:114px;height:19px;background:#454545;border:1px solid #6a6a6a;"></div>
<div class="t" style="left:1146px;top:253.25px;font-size:12.5px;color:#f2f2f2;">多个</div>
<svg style="left:1240px;top:256px;" width="9" height="6" viewBox="0 0 9 6"><path d="M0.8 0.8L4.5 4.6L8.2 0.8" stroke="#c8c8c8" stroke-width="1.3" fill="none"/></svg>
<div class="t" style="left:1258px;top:252px;font-size:9px;color:#e8e8e8;">a</div>
<div class="t" style="left:1263px;top:253px;font-size:12px;color:#e8e8e8;">a</div>
<div style="left:1279px;top:249px;width:65px;height:19px;background:#454545;border:1px solid #6a6a6a;"></div>
<div class="t" style="left:1286px;top:253.25px;font-size:12.5px;color:#f2f2f2;">无</div>
<svg style="left:1331px;top:256px;" width="9" height="6" viewBox="0 0 9 6"><path d="M0.8 0.8L4.5 4.6L8.2 0.8" stroke="#c8c8c8" stroke-width="1.3" fill="none"/></svg>
<div style="left:1133px;top:272px;width:235px;height:5px;background:#3c3c3c;"></div>
<div style="left:1133px;top:277px;width:235px;height:27px;background:#424242;"></div>
<div style="left:1133px;top:277px;width:39px;height:27px;background:#535353;"></div>
<div style="left:1172px;top:277px;width:1px;height:27px;background:#383838;"></div>
<div style="left:1212px;top:277px;width:1px;height:27px;background:#383838;"></div>
<div class="t" style="left:1141px;top:284.5px;font-size:11.5px;color:#f0f0f0;font-weight:bold">图层</div>
<div class="t" style="left:1182px;top:284.5px;font-size:11.5px;color:#a0a0a0;">通道</div>
<svg style="left:1358px;top:286px;" width="10" height="8" viewBox="0 0 10 8"><path d="M0 0.5H11M0 2.8H11M0 5.1H11M0 7.4H11" stroke="#cfcfcf" stroke-width="1"/></svg>
<div style="left:1135px;top:311px;width:86px;height:19px;background:#424242;border:1px solid #3c3c3c;"></div>
<svg style="left:1141px;top:314px;" width="12" height="12" viewBox="0 0 12 12"><circle cx="7.3" cy="4.7" r="3.4" stroke="#e0e0e0" stroke-width="1.5" fill="none"/><path d="M4.8 7.2L1 11" stroke="#e0e0e0" stroke-width="2"/></svg>
<div class="t" style="left:1158px;top:316px;font-size:12px;color:#f0f0f0;">类型</div>
<svg style="left:1208px;top:318px;" width="10" height="6" viewBox="0 0 10 6"><path d="M0.8 0.8L5 5L9.2 0.8" stroke="#b0b0b0" stroke-width="1.3" fill="none"/></svg>
<svg style="left:1237px;top:316px;" width="13" height="11" viewBox="0 0 13 11"><rect x="0.6" y="0.6" width="11.8" height="9.8" fill="none" stroke="#e4e4e4" stroke-width="1.2"/><path d="M2.5 8.5L5 5L7 7L8.5 5.5L10.5 8.5Z" fill="#e4e4e4"/></svg>
<svg style="left:1262px;top:315.5px;" width="12" height="12" viewBox="0 0 12 12"><circle cx="6" cy="6" r="5.1" fill="none" stroke="#e4e4e4" stroke-width="1.3"/><path d="M2.4 9.6A5.1 5.1 0 0 0 9.6 2.4Z" fill="#e4e4e4"/></svg>
<div class="t serif" style="left:1287px;top:314.5px;font-size:14.5px;color:#e4e4e4;font-weight:bold">T</div>
<svg style="left:1309.5px;top:315.5px;" width="13" height="13" viewBox="0 0 13 13"><g transform="scale(0.923)"><rect x="2" y="2" width="9" height="9" fill="none" stroke="#e4e4e4" stroke-width="1.2"/><rect x="0" y="0" width="3.4" height="3.4" fill="#e4e4e4"/><rect x="9.6" y="0" width="3.4" height="3.4" fill="#e4e4e4"/><rect x="0" y="9.6" width="3.4" height="3.4" fill="#e4e4e4"/><rect x="9.6" y="9.6" width="3.4" height="3.4" fill="#e4e4e4"/><rect x="1" y="1" width="1.4" height="1.4" fill="#535353"/><rect x="10.6" y="1" width="1.4" height="1.4" fill="#535353"/><rect x="1" y="10.6" width="1.4" height="1.4" fill="#535353"/><rect x="10.6" y="10.6" width="1.4" height="1.4" fill="#535353"/></g></svg>
<svg style="left:1334px;top:314px;" width="12" height="14" viewBox="0 0 12 14"><path d="M3.5 0.6H8L11.4 4V10.5H3.5Z" fill="none" stroke="#e4e4e4" stroke-width="1.2"/><path d="M7.6 0.6V4.2H11.4" fill="none" stroke="#e4e4e4" stroke-width="1"/><rect x="0.5" y="7" width="6" height="6.5" fill="#e4e4e4"/></svg>
<svg style="left:1361px;top:313px;" width="7" height="12" viewBox="0 0 7 12"><circle cx="6.5" cy="6" r="5.5" fill="#e4e4e4"/></svg>
<div style="left:1361px;top:322px;width:7px;height:6px;background:#444;"></div>
<div style="left:1133px;top:334px;width:235px;height:1px;background:#474747;"></div>
<div style="left:1135px;top:339px;width:117px;height:19px;background:#4b4b4b;border:1px solid #595959;"></div>
<div class="t" style="left:1144px;top:343px;font-size:12px;color:#8c8c8c;">正常</div>
<svg style="left:1240px;top:346px;" width="8" height="5" viewBox="0 0 8 5"><path d="M0.8 0.8L4 4L7.2 0.8" stroke="#6c6c6c" stroke-width="1.2" fill="none"/></svg>
<div class="t" style="left:1260px;top:343px;font-size:12px;color:#8c8c8c;letter-spacing:-0.1px">不透明度:</div>
<div style="left:1318px;top:340px;width:36px;height:18px;background:#4b4b4b;border:1px solid #595959;"></div>
<div class="t" style="left:1320.5px;top:343.5px;font-size:11.5px;color:#777;">100%</div>
<div style="left:1356px;top:340px;width:12px;height:18px;background:#4b4b4b;border:1px solid #595959;border-right:0;"></div>
<div style="left:1133px;top:362px;width:235px;height:1px;background:#474747;"></div>
<div class="t" style="left:1137px;top:370.5px;font-size:12px;color:#8c8c8c;">锁定:</div>
<svg style="left:1175px;top:370px;" width="12" height="12" viewBox="0 0 12 12"><rect x="0.5" y="0.5" width="11" height="11" fill="none" stroke="#b4b4b4"/><rect x="1" y="1" width="3.4" height="3.4" fill="#b4b4b4"/><rect x="7.6" y="1" width="3.4" height="3.4" fill="#b4b4b4"/><rect x="4.3" y="4.3" width="3.4" height="3.4" fill="#b4b4b4"/><rect x="1" y="7.6" width="3.4" height="3.4" fill="#b4b4b4"/><rect x="7.6" y="7.6" width="3.4" height="3.4" fill="#b4b4b4"/></svg>
<svg style="left:1196px;top:369.5px;" width="14" height="14" viewBox="0 0 14 14"><path d="M12.8 0.8L13.4 1.6L6.5 9.5L5 8.2Z" fill="#b4b4b4"/><path d="M4.6 8.6L6 10C5.5 12.5 3 13.4 0.6 13C2.4 12 2 9.2 4.6 8.6Z" fill="#b4b4b4"/></svg>
<svg style="left:1218px;top:369.5px;" width="14" height="14" viewBox="0 0 14 14"><path d="M7 1V13M1 7H13" stroke="#b4b4b4" stroke-width="1.3"/><path d="M7 0L9.3 3H4.7ZM7 14L9.3 11H4.7ZM0 7L3 4.7V9.3ZM14 7L11 4.7V9.3Z" fill="#b4b4b4"/></svg>
<svg style="left:1240px;top:368.5px;" width="15" height="15" viewBox="0 0 15 15"><path d="M3.5 0V15M0 11.5H15M3.5 3.5H9M11.5 6V11.5" stroke="#b4b4b4" stroke-width="1.2" fill="none"/><path d="M9.5 1L14 5.5M10 5L13.5 1.5" stroke="#b4b4b4" stroke-width="1"/></svg>
<svg style="left:1263.5px;top:369px;" width="11" height="13" viewBox="0 0 11 13"><path d="M2.8 6V3.9A2.7 2.7 0 0 1 8.2 3.9V6" fill="none" stroke="#b4b4b4" stroke-width="1.5"/><rect x="0.5" y="5.8" width="10" height="6.9" rx="0.8" fill="#b4b4b4"/><rect x="4.7" y="8" width="1.6" height="2.6" fill="#535353"/></svg>
<div class="t" style="left:1285px;top:370.5px;font-size:12px;color:#8c8c8c;">填充:</div>
<div style="left:1318px;top:367px;width:36px;height:18px;background:#4b4b4b;border:1px solid #595959;"></div>
<div class="t" style="left:1320.5px;top:370.5px;font-size:11.5px;color:#777;">100%</div>
<div style="left:1356px;top:367px;width:12px;height:18px;background:#4b4b4b;border:1px solid #595959;border-right:0;"></div>
<div style="left:1133px;top:388px;width:235px;height:1px;background:#474747;"></div>
<div style="left:1360px;top:390px;width:8px;height:232px;background:#4a4a4a;"></div>
<div style="left:1134px;top:429.0px;width:226px;height:1px;background:#474747;"></div>
<svg style="left:1139px;top:405.5px;" width="15" height="10" viewBox="0 0 15 10"><path d="M0.5 5C3 1.4 5.5 0.6 7.5 0.6C9.5 0.6 12 1.4 14.5 5C12 8.6 9.5 9.4 7.5 9.4C5.5 9.4 3 8.6 0.5 5Z" fill="#ececec"/><circle cx="7.5" cy="4.8" r="2.8" fill="#535353"/><circle cx="7.5" cy="4.8" r="1.4" fill="#ececec"/></svg>
<div style="left:1160px;top:390.0px;width:1px;height:39px;background:#4a4a4a;"></div>
<div style="left:1165px;top:393.5px;width:32px;height:32px;border:1px solid #2e2e2e;background-color:#fff;background-image:conic-gradient(#ccc 25%,#fff 0 50%,#ccc 0 75%,#fff 0);background-size:8px 8px;background-position:1px 1px;overflow:hidden"><svg style="left:0;top:0" width="30" height="30" viewBox="0 0 414 414"><circle cx="207" cy="207" r="173" fill="#fff"/><path d="M34 207 A173 173 0 0 0 380 207 A86.5 86.5 0 0 1 207 207 A86.5 86.5 0 0 0 34 207 Z" fill="#000"/><circle cx="120.5" cy="207" r="22" fill="#fff"/><circle cx="293.2" cy="207" r="22" fill="#000"/></svg></div>
<div class="t" style="left:1206px;top:405.5px;font-size:12.5px;color:#f0f0f0;">图层 1</div>
<div style="left:1134px;top:468.1px;width:226px;height:1px;background:#474747;"></div>
<svg style="left:1139px;top:444.6px;" width="15" height="10" viewBox="0 0 15 10"><path d="M0.5 5C3 1.4 5.5 0.6 7.5 0.6C9.5 0.6 12 1.4 14.5 5C12 8.6 9.5 9.4 7.5 9.4C5.5 9.4 3 8.6 0.5 5Z" fill="#ececec"/><circle cx="7.5" cy="4.8" r="2.8" fill="#535353"/><circle cx="7.5" cy="4.8" r="1.4" fill="#ececec"/></svg>
<div style="left:1160px;top:429.1px;width:1px;height:39px;background:#4a4a4a;"></div>
<div style="left:1165px;top:432.6px;width:32px;height:32px;border:1px solid #2e2e2e;background-color:#fff;background-image:conic-gradient(#ccc 25%,#fff 0 50%,#ccc 0 75%,#fff 0);background-size:8px 8px;background-position:1px 1px;overflow:hidden"><svg style="left:0;top:0" width="30" height="30"><circle cx="21.5" cy="15" r="1.2" fill="#000"/></svg></div>
<div style="left:1183.5px;top:450.6px;width:14px;height:14px;background:#535353;"></div>
<svg style="left:1185.0px;top:452.1px;" width="12" height="12" viewBox="0 0 12 12"><rect x="2" y="2" width="7.5" height="7.5" fill="none" stroke="#e6e6e6" stroke-width="1"/><g fill="#535353" stroke="#e6e6e6" stroke-width="0.9"><rect x="0.7" y="0.7" width="2.6" height="2.6"/><rect x="8.2" y="0.7" width="2.6" height="2.6"/><rect x="0.7" y="8.2" width="2.6" height="2.6"/><rect x="8.2" y="8.2" width="2.6" height="2.6"/></g></svg>
<div class="t" style="left:1206px;top:444.6px;font-size:12.5px;color:#f0f0f0;">椭圆 4 拷贝</div>
<div style="left:1134px;top:507.2px;width:226px;height:1px;background:#474747;"></div>
<svg style="left:1139px;top:483.7px;" width="15" height="10" viewBox="0 0 15 10"><path d="M0.5 5C3 1.4 5.5 0.6 7.5 0.6C9.5 0.6 12 1.4 14.5 5C12 8.6 9.5 9.4 7.5 9.4C5.5 9.4 3 8.6 0.5 5Z" fill="#ececec"/><circle cx="7.5" cy="4.8" r="2.8" fill="#535353"/><circle cx="7.5" cy="4.8" r="1.4" fill="#ececec"/></svg>
<div style="left:1160px;top:468.2px;width:1px;height:39px;background:#4a4a4a;"></div>
<div style="left:1165px;top:471.7px;width:32px;height:32px;border:1px solid #2e2e2e;background-color:#fff;background-image:conic-gradient(#ccc 25%,#fff 0 50%,#ccc 0 75%,#fff 0);background-size:8px 8px;background-position:1px 1px;overflow:hidden"></div>
<div style="left:1183.5px;top:489.7px;width:14px;height:14px;background:#535353;"></div>
<svg style="left:1185.0px;top:491.2px;" width="12" height="12" viewBox="0 0 12 12"><rect x="2" y="2" width="7.5" height="7.5" fill="none" stroke="#e6e6e6" stroke-width="1"/><g fill="#535353" stroke="#e6e6e6" stroke-width="0.9"><rect x="0.7" y="0.7" width="2.6" height="2.6"/><rect x="8.2" y="0.7" width="2.6" height="2.6"/><rect x="0.7" y="8.2" width="2.6" height="2.6"/><rect x="8.2" y="8.2" width="2.6" height="2.6"/></g></svg>
<div class="t" style="left:1206px;top:483.7px;font-size:12.5px;color:#f0f0f0;">椭圆 4</div>
<div style="left:1134px;top:546.3px;width:226px;height:1px;background:#474747;"></div>
<svg style="left:1139px;top:522.8px;" width="15" height="10" viewBox="0 0 15 10"><path d="M0.5 5C3 1.4 5.5 0.6 7.5 0.6C9.5 0.6 12 1.4 14.5 5C12 8.6 9.5 9.4 7.5 9.4C5.5 9.4 3 8.6 0.5 5Z" fill="#ececec"/><circle cx="7.5" cy="4.8" r="2.8" fill="#535353"/><circle cx="7.5" cy="4.8" r="1.4" fill="#ececec"/></svg>
<div style="left:1160px;top:507.3px;width:1px;height:39px;background:#4a4a4a;"></div>
<div style="left:1165px;top:510.8px;width:32px;height:32px;border:1px solid #2e2e2e;background-color:#fff;background-image:conic-gradient(#ccc 25%,#fff 0 50%,#ccc 0 75%,#fff 0);background-size:8px 8px;background-position:1px 1px;overflow:hidden"></div>
<div style="left:1183.5px;top:528.8px;width:14px;height:14px;background:#535353;"></div>
<svg style="left:1185.0px;top:530.3px;" width="12" height="12" viewBox="0 0 12 12"><rect x="2" y="2" width="7.5" height="7.5" fill="none" stroke="#e6e6e6" stroke-width="1"/><g fill="#535353" stroke="#e6e6e6" stroke-width="0.9"><rect x="0.7" y="0.7" width="2.6" height="2.6"/><rect x="8.2" y="0.7" width="2.6" height="2.6"/><rect x="0.7" y="8.2" width="2.6" height="2.6"/><rect x="8.2" y="8.2" width="2.6" height="2.6"/></g></svg>
<div class="t" style="left:1206px;top:522.8px;font-size:12.5px;color:#f0f0f0;">椭圆 3 拷贝</div>
<div style="left:1134px;top:585.4px;width:226px;height:1px;background:#474747;"></div>
<svg style="left:1139px;top:561.9px;" width="15" height="10" viewBox="0 0 15 10"><path d="M0.5 5C3 1.4 5.5 0.6 7.5 0.6C9.5 0.6 12 1.4 14.5 5C12 8.6 9.5 9.4 7.5 9.4C5.5 9.4 3 8.6 0.5 5Z" fill="#ececec"/><circle cx="7.5" cy="4.8" r="2.8" fill="#535353"/><circle cx="7.5" cy="4.8" r="1.4" fill="#ececec"/></svg>
<div style="left:1160px;top:546.4px;width:1px;height:39px;background:#4a4a4a;"></div>
<div style="left:1165px;top:549.9px;width:32px;height:32px;border:1px solid #2e2e2e;background-color:#fff;background-image:conic-gradient(#ccc 25%,#fff 0 50%,#ccc 0 75%,#fff 0);background-size:8px 8px;background-position:1px 1px;overflow:hidden"><svg style="left:0;top:0" width="30" height="30"><circle cx="8.3" cy="15" r="6.2" fill="#000"/></svg></div>
<div style="left:1183.5px;top:567.9px;width:14px;height:14px;background:#535353;"></div>
<svg style="left:1185.0px;top:569.4px;" width="12" height="12" viewBox="0 0 12 12"><rect x="2" y="2" width="7.5" height="7.5" fill="none" stroke="#e6e6e6" stroke-width="1"/><g fill="#535353" stroke="#e6e6e6" stroke-width="0.9"><rect x="0.7" y="0.7" width="2.6" height="2.6"/><rect x="8.2" y="0.7" width="2.6" height="2.6"/><rect x="0.7" y="8.2" width="2.6" height="2.6"/><rect x="8.2" y="8.2" width="2.6" height="2.6"/></g></svg>
<div class="t" style="left:1206px;top:561.9px;font-size:12.5px;color:#f0f0f0;">椭圆 3</div>
<div style="left:1134px;top:624.5px;width:226px;height:1px;background:#474747;"></div>
<svg style="left:1139px;top:601.0px;" width="15" height="10" viewBox="0 0 15 10"><path d="M0.5 5C3 1.4 5.5 0.6 7.5 0.6C9.5 0.6 12 1.4 14.5 5C12 8.6 9.5 9.4 7.5 9.4C5.5 9.4 3 8.6 0.5 5Z" fill="#ececec"/><circle cx="7.5" cy="4.8" r="2.8" fill="#535353"/><circle cx="7.5" cy="4.8" r="1.4" fill="#ececec"/></svg>
<div style="left:1160px;top:585.5px;width:1px;height:39px;background:#4a4a4a;"></div>
<div style="left:1165px;top:589.0px;width:32px;height:32px;border:1px solid #2e2e2e;background-color:#fff;background-image:conic-gradient(#ccc 25%,#fff 0 50%,#ccc 0 75%,#fff 0);background-size:8px 8px;background-position:1px 1px;overflow:hidden"><svg style="left:0;top:0" width="30" height="30"><circle cx="15" cy="15" r="12.5" fill="#fff"/><path d="M2.5 15A12.5 12.5 0 0 0 27.500 15Z" fill="#000"/></svg></div>
<div class="t" style="left:1206px;top:601.0px;font-size:12.5px;color:#f0f0f0;">椭圆 2</div>
</body></html>
